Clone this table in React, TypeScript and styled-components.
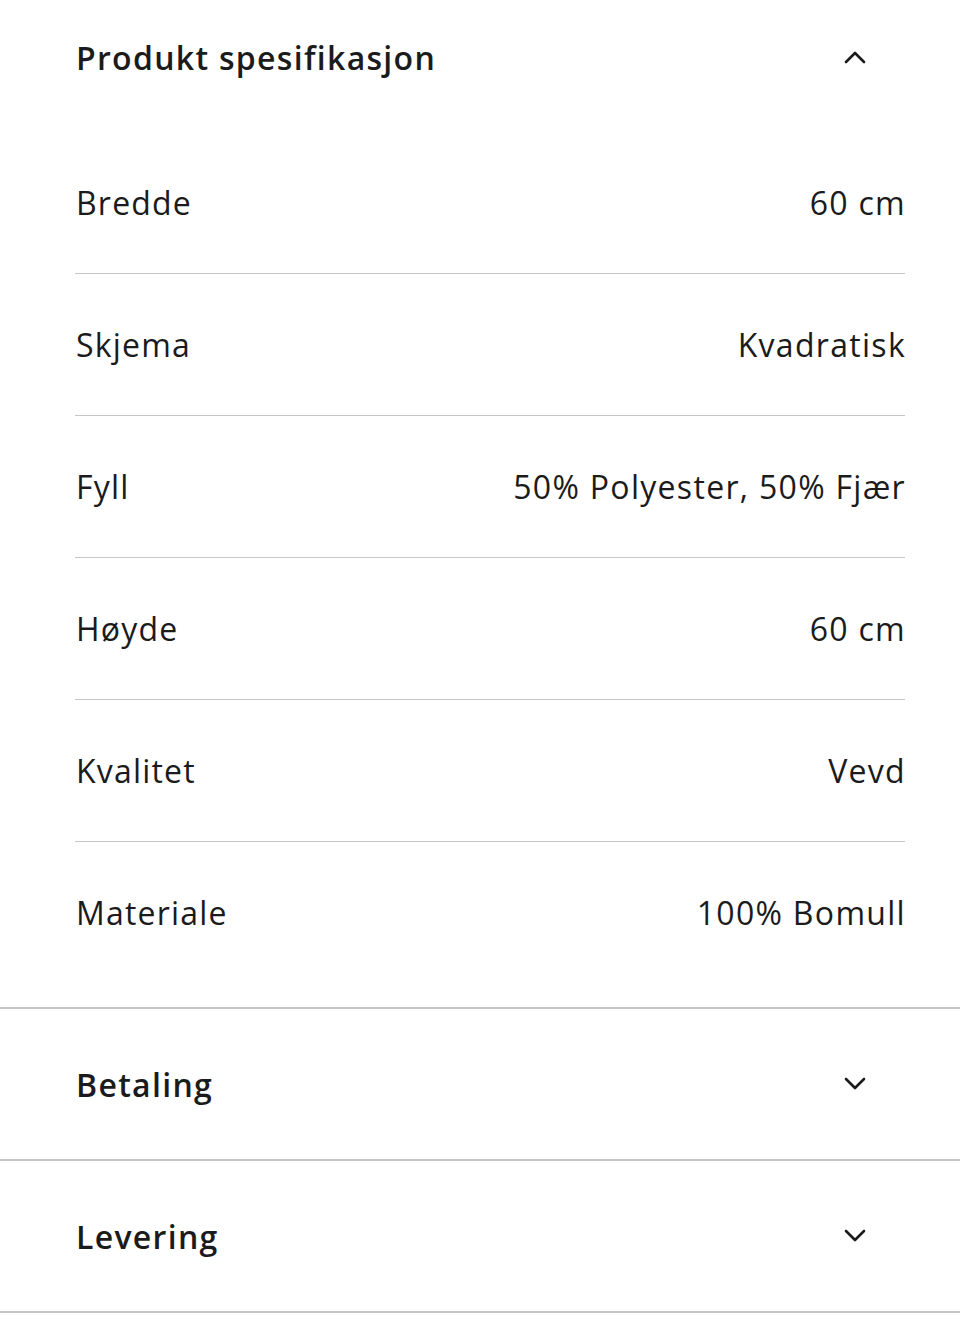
import React, { FC } from 'react';
import styled, { createGlobalStyle } from 'styled-components';

const GlobalStyle = createGlobalStyle`
    html, body {
        margin: 0;
        padding: 0;
        background: #ffffff;
    }

    body {
        font-family: 'Open Sans', 'Noto Sans', sans-serif;
        color: #1b1b1b;
        -webkit-font-smoothing: antialiased;
    }

    *, *::before, *::after {
        box-sizing: border-box;
    }
`;

const specs = [
    { label: 'Bredde', value: '60 cm' },
    { label: 'Skjema', value: 'Kvadratisk' },
    { label: 'Fyll', value: '50% Polyester, 50% Fjær' },
    { label: 'Høyde', value: '60 cm' },
    { label: 'Kvalitet', value: 'Vevd' },
    { label: 'Materiale', value: '100% Bomull' },
];

const Chevron: FC<{ up?: boolean }> = ({ up }) => (
    <svg width="24" height="14" viewBox="0 0 24 14" fill="none">
        <path
            d={up ? 'M3 12 L12 3 L21 12' : 'M3 2 L12 11 L21 2'}
            stroke="#1b1b1b"
            strokeWidth="2.6"
            strokeLinecap="round"
            strokeLinejoin="round"
        />
    </svg>
);

const Section = styled.section<{ $open?: boolean }>`
    border-bottom: 2px solid #c6c6c6;
    padding-bottom: ${({ $open }) => ($open ? '24px' : '0')};
`;

const Header = styled.button<{ $height: number }>`
    all: unset;
    box-sizing: border-box;
    display: flex;
    align-items: center;
    justify-content: space-between;
    width: 100%;
    height: ${({ $height }) => $height}px;
    padding: 0 93px 0 76px;
    cursor: pointer;
`;

const Title = styled.h2`
    margin: 0;
    font-size: 32px;
    font-weight: 600;
    letter-spacing: 1.3px;
    color: #1b1b1b;
`;

const SpecList = styled.dl`
    margin: 18px 55px 0 75px;
    padding: 0;
`;

const SpecRow = styled.div`
    display: flex;
    align-items: center;
    justify-content: space-between;
    height: 142px;
    border-bottom: 1px solid #c6c6c6;

    &:last-child {
        height: 141px;
        border-bottom: none;
    }
`;

const Label = styled.dt`
    margin: 0 0 0 1px;
    font-size: 32px;
    font-weight: 400;
    letter-spacing: 1.2px;
`;

const Value = styled.dd`
    margin: 0 -1px 0 0;
    font-size: 32px;
    font-weight: 400;
    letter-spacing: 1.3px;
    text-align: right;
`;

const App: FC = () => (
    <>
        <GlobalStyle />
        <Section $open>
            <Header $height={114}>
                <Title>Produkt spesifikasjon</Title>
                <Chevron up />
            </Header>
            <SpecList>
                {specs.map((item) => (
                    <SpecRow key={item.label}>
                        <Label>{item.label}</Label>
                        <Value>{item.value}</Value>
                    </SpecRow>
                ))}
            </SpecList>
        </Section>
        <Section>
            <Header $height={150}>
                <Title>Betaling</Title>
                <Chevron />
            </Header>
        </Section>
        <Section>
            <Header $height={150}>
                <Title>Levering</Title>
                <Chevron />
            </Header>
        </Section>
    </>
);

export default App;
